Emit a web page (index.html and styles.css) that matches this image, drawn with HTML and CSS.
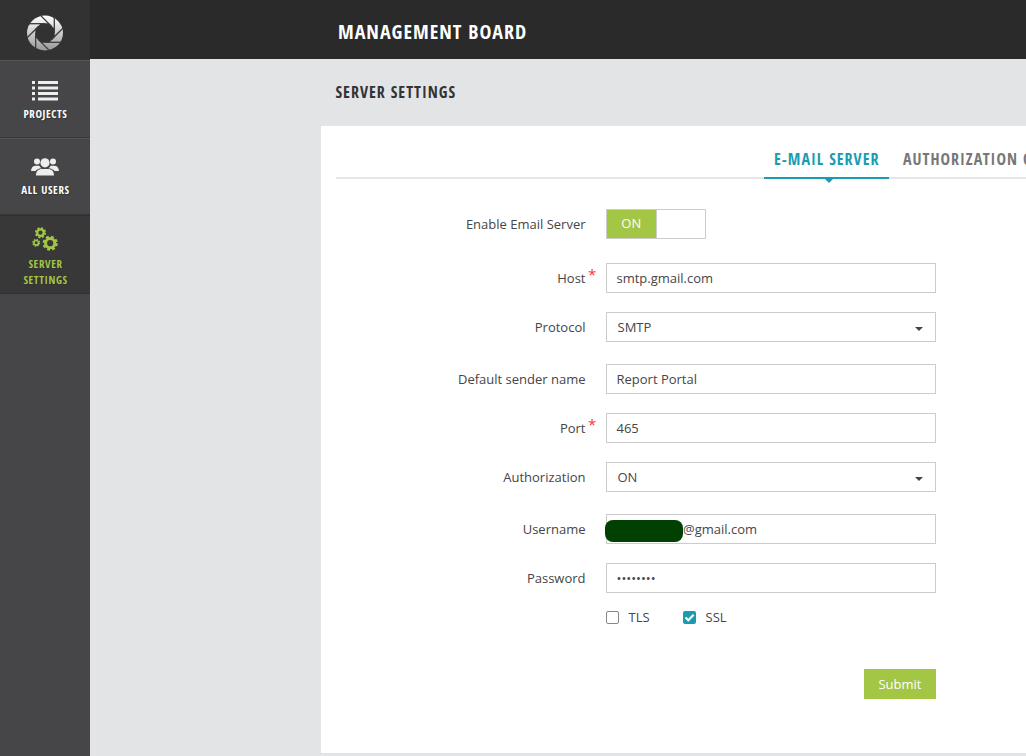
FILE: index.html
```html
<!DOCTYPE html>
<html lang="en">
<head>
<meta charset="utf-8">
<title>Management Board</title>
<link rel="stylesheet" href="styles.css">
</head>
<body>
<div class="app">
  <nav class="sidebar">
    <a class="logo">
      <svg width="38" height="38" viewBox="0 0 38 38">
        <defs><linearGradient id="metal" x1="0" y1="0" x2="0" y2="1"><stop offset="0" stop-color="#fff"/><stop offset="1" stop-color="#999"/></linearGradient></defs>
        <ellipse cx="19" cy="19" rx="18" ry="17.400" fill="url(#metal)"/>
        <path d="M15 9.300H23L28.700 15V23L23 28.700H15L9.300 23V15Z" fill="#323232"/>
        <g stroke="#3c3c3c" stroke-width="1.300" fill="none">
          <path d="M3 9.700H19"/>
          <path d="M3 9.700H19" transform="rotate(45 19 19)"/>
          <path d="M3 9.700H19" transform="rotate(90 19 19)"/>
          <path d="M3 9.700H19" transform="rotate(135 19 19)"/>
          <path d="M3 9.700H19" transform="rotate(180 19 19)"/>
          <path d="M3 9.700H19" transform="rotate(225 19 19)"/>
          <path d="M3 9.700H19" transform="rotate(270 19 19)"/>
          <path d="M3 9.700H19" transform="rotate(315 19 19)"/>
        </g>
      </svg>
    </a>
    <a class="nav-item projects">
      <svg width="26" height="20" viewBox="0 0 26 20" fill="#eee"><path d="M0 0h3v3H0zM6 0h20v3H6zM0 5.500h3v3H0zM6 5.500h20v3H6zM0 11h3v3H0zM6 11h20v3H6zM0 16.500h3v3H0zM6 16.500h20v3H6z"/></svg>
      <span>PROJECTS</span>
    </a>
    <a class="nav-item users">
      <svg width="28" height="18" viewBox="0 0 28 18" fill="#eee"><circle cx="6" cy="3.500" r="3"/><circle cx="22" cy="3.500" r="3"/><circle cx="14" cy="4.800" r="4.600"/><path d="M0 13C.2 9.500 2 7.700 5 7.700H8.500C9 9 9.500 9.800 10.500 10.200C7.500 10.500 5.500 11.500 4.500 13ZM28 13C27.800 9.500 26 7.700 23 7.700H19.500C19 9 18.500 9.800 17.500 10.200C20.500 10.500 22.500 11.500 23.500 13ZM5 17.500C5 13 7.500 11 11 11H17C20.500 11 23 13 23 17.500Z"/></svg>
      <span>ALL USERS</span>
    </a>
    <a class="nav-item settings active">
      <svg width="26" height="24" viewBox="0 0 26 24" fill="none" stroke="#a3c644">
        <circle cx="8.500" cy="5.700" r="3.300" stroke-width="2.300"/><circle cx="8.500" cy="5.700" r="4.700" stroke-width="1.800" stroke-dasharray="2 1.690"/>
        <circle cx="4.200" cy="15.800" r="2.300" stroke-width="1.700"/><circle cx="4.200" cy="15.800" r="3.300" stroke-width="1.400" stroke-dasharray="1.400 1.190"/>
        <circle cx="18.200" cy="16.200" r="4.600" stroke-width="3"/><circle cx="18.200" cy="16.200" r="6.400" stroke-width="2.400" stroke-dasharray="2.800 2.227"/>
      </svg>
      <span>SERVER<br>SETTINGS</span>
    </a>
  </nav>
  <div class="page">
    <header class="topbar"><h1>MANAGEMENT BOARD</h1></header>
    <main class="content">
      <h2>SERVER SETTINGS</h2>
      <section class="panel">
        <div class="tabs"><a class="tab selected">E-MAIL SERVER</a><a class="tab second">AUTHORIZATION C</a></div>
        <form class="form">
          <div class="row first"><label>Enable Email Server</label><div class="switch"><span class="on">ON</span><span class="off"></span></div></div>
          <div class="row"><label class="required">Host</label><div class="field">smtp.gmail.com</div></div>
          <div class="row select-row"><label>Protocol</label><div class="field select">SMTP</div></div>
          <div class="row"><label>Default sender name</label><div class="field">Report Portal</div></div>
          <div class="row"><label class="required">Port</label><div class="field">465</div></div>
          <div class="row select-row"><label>Authorization</label><div class="field select">ON</div></div>
          <div class="row"><label>Username</label><div class="field user"><span class="mask"></span>@gmail.com</div></div>
          <div class="row"><label>Password</label><div class="field password">••••••••</div></div>
          <div class="checks"><span class="box"></span><span class="tls">TLS</span><span class="box checked"><svg width="13" height="13" viewBox="0 0 13 13"><path d="M2.500 6.500L5.300 9.300L10.600 3.800" fill="none" stroke="#fff" stroke-width="2.100"/></svg></span><span>SSL</span></div>
          <div class="actions"><span class="submit">Submit</span></div>
        </form>
      </section>
    </main>
  </div>
</div>
</body>
</html>
```
FILE: styles.css
```css
* { box-sizing: border-box; }
body { margin: 0; overflow: hidden; font: 13px/18px "Open Sans", "Noto Sans", sans-serif; color: #464547; }
.app { display: flex; width: 1026px; height: 756px; overflow: hidden; background: #e3e4e6; }
.sidebar { width: 90px; flex: none; background: #464547; }
.sidebar, h1, h2, .tab { font-family: "Open Sans Condensed", "Open Sans", sans-serif; font-stretch: 75%; font-weight: 700; }
.logo { display: flex; height: 60px; background: #323232; padding: 14px 0 0 26px; }
.nav-item { display: flex; flex-direction: column; align-items: center; border-top: 1px solid #555456; border-bottom: 1px solid #363537; color: #fff; font-size: 11px; line-height: 16px; letter-spacing: .6px; text-align: center; text-shadow: 1px 1px 1px #333; }
.nav-item svg { flex: none; }
.nav-item span { padding-left: 1px; }
.projects { height: 78px; padding-top: 20px; }
.projects span { margin-top: 5px; }
.users { height: 77px; padding-top: 19px; }
.users span { margin-top: 6px; }
.settings { height: 79px; padding-top: 11px; background: #383838; border-color: #303030; color: #a3c644; }
.settings span { margin-top: 5px; }
.page { flex: 1; min-width: 0; }
.topbar { height: 59px; padding: 18px 0 0 248px; background: #2a2a2a; }
h1 { margin: 0; font-size: 20px; line-height: 28px; letter-spacing: 1px; color: #fff; white-space: nowrap; }
.content { padding-left: 231px; }
h2 { margin: 0; height: 67px; padding: 22px 0 0 14.5px; font-size: 16px; line-height: 22px; letter-spacing: 1px; color: #333; white-space: nowrap; }
.panel { width: 705px; height: 627px; padding: 14px 0 0 15px; background: #fff; overflow: hidden; }
.tabs { display: flex; height: 39px; padding-left: 428px; border-bottom: 2px solid #e6e6e6; white-space: nowrap; }
.tab { flex: none; height: 39px; padding: 8px 10px 0; font-size: 16px; line-height: 22px; letter-spacing: 1px; color: #777; }
.tab.selected { position: relative; width: 125px; color: #1a9cb0; border-bottom: 2px solid #1a9cb0; }
.selected::after { content: ""; position: absolute; left: 60px; top: 38px; border: 5px solid transparent; border-top-color: #1a9cb0; border-bottom: 0; }
.tab.second { padding-left: 14px; }
.form { padding-top: 30px; }
.row { display: flex; align-items: center; height: 30px; margin-bottom: 19px; }
.row.first { margin-bottom: 24px; }
.row.select-row { margin-bottom: 22px; }
.row label { position: relative; width: 249.5px; text-align: right; margin-right: 20.5px; }
.required::after { content: "*"; position: absolute; left: 252px; top: -4px; color: #f33; font-size: 15px; }
.field { display: flex; align-items: center; width: 330px; height: 30px; border: 1px solid #ccc; padding: 0 9.5px; background: #fff; }
.select { justify-content: space-between; padding-left: 10.5px; padding-right: 12px; }
.select::after { content: ""; border: 4px solid transparent; border-top-color: #444; border-bottom: 0; margin-top: 3px; }
.field.user { padding-left: 0; }
.mask { width: 78px; height: 22px; margin: 3px 0 0 -2px; border-radius: 8px; background: #004000; }
.switch { display: flex; width: 100px; height: 30px; border: 1px solid #ccc; }
.on { width: 48.5px; background: #a3c644; color: #fff; font-weight: 500; line-height: 27px; text-align: center; }
.off { flex: 1; border-left: 1px solid #ccc; }
.checks { display: flex; align-items: center; height: 18px; margin-top: -4px; padding-left: 270px; }
.box { width: 13px; height: 13px; margin-right: 9.5px; border: 1px solid #888; border-radius: 2px; }
.tls { width: 54.5px; }
.checked { border: 0; background: #1a9cb0; display: flex; }
.actions { display: flex; padding: 43px 0 0 528px; }
.submit { width: 72px; height: 30px; background: #a3c644; color: #fff; font-weight: 500; line-height: 30px; text-align: center; }
```
